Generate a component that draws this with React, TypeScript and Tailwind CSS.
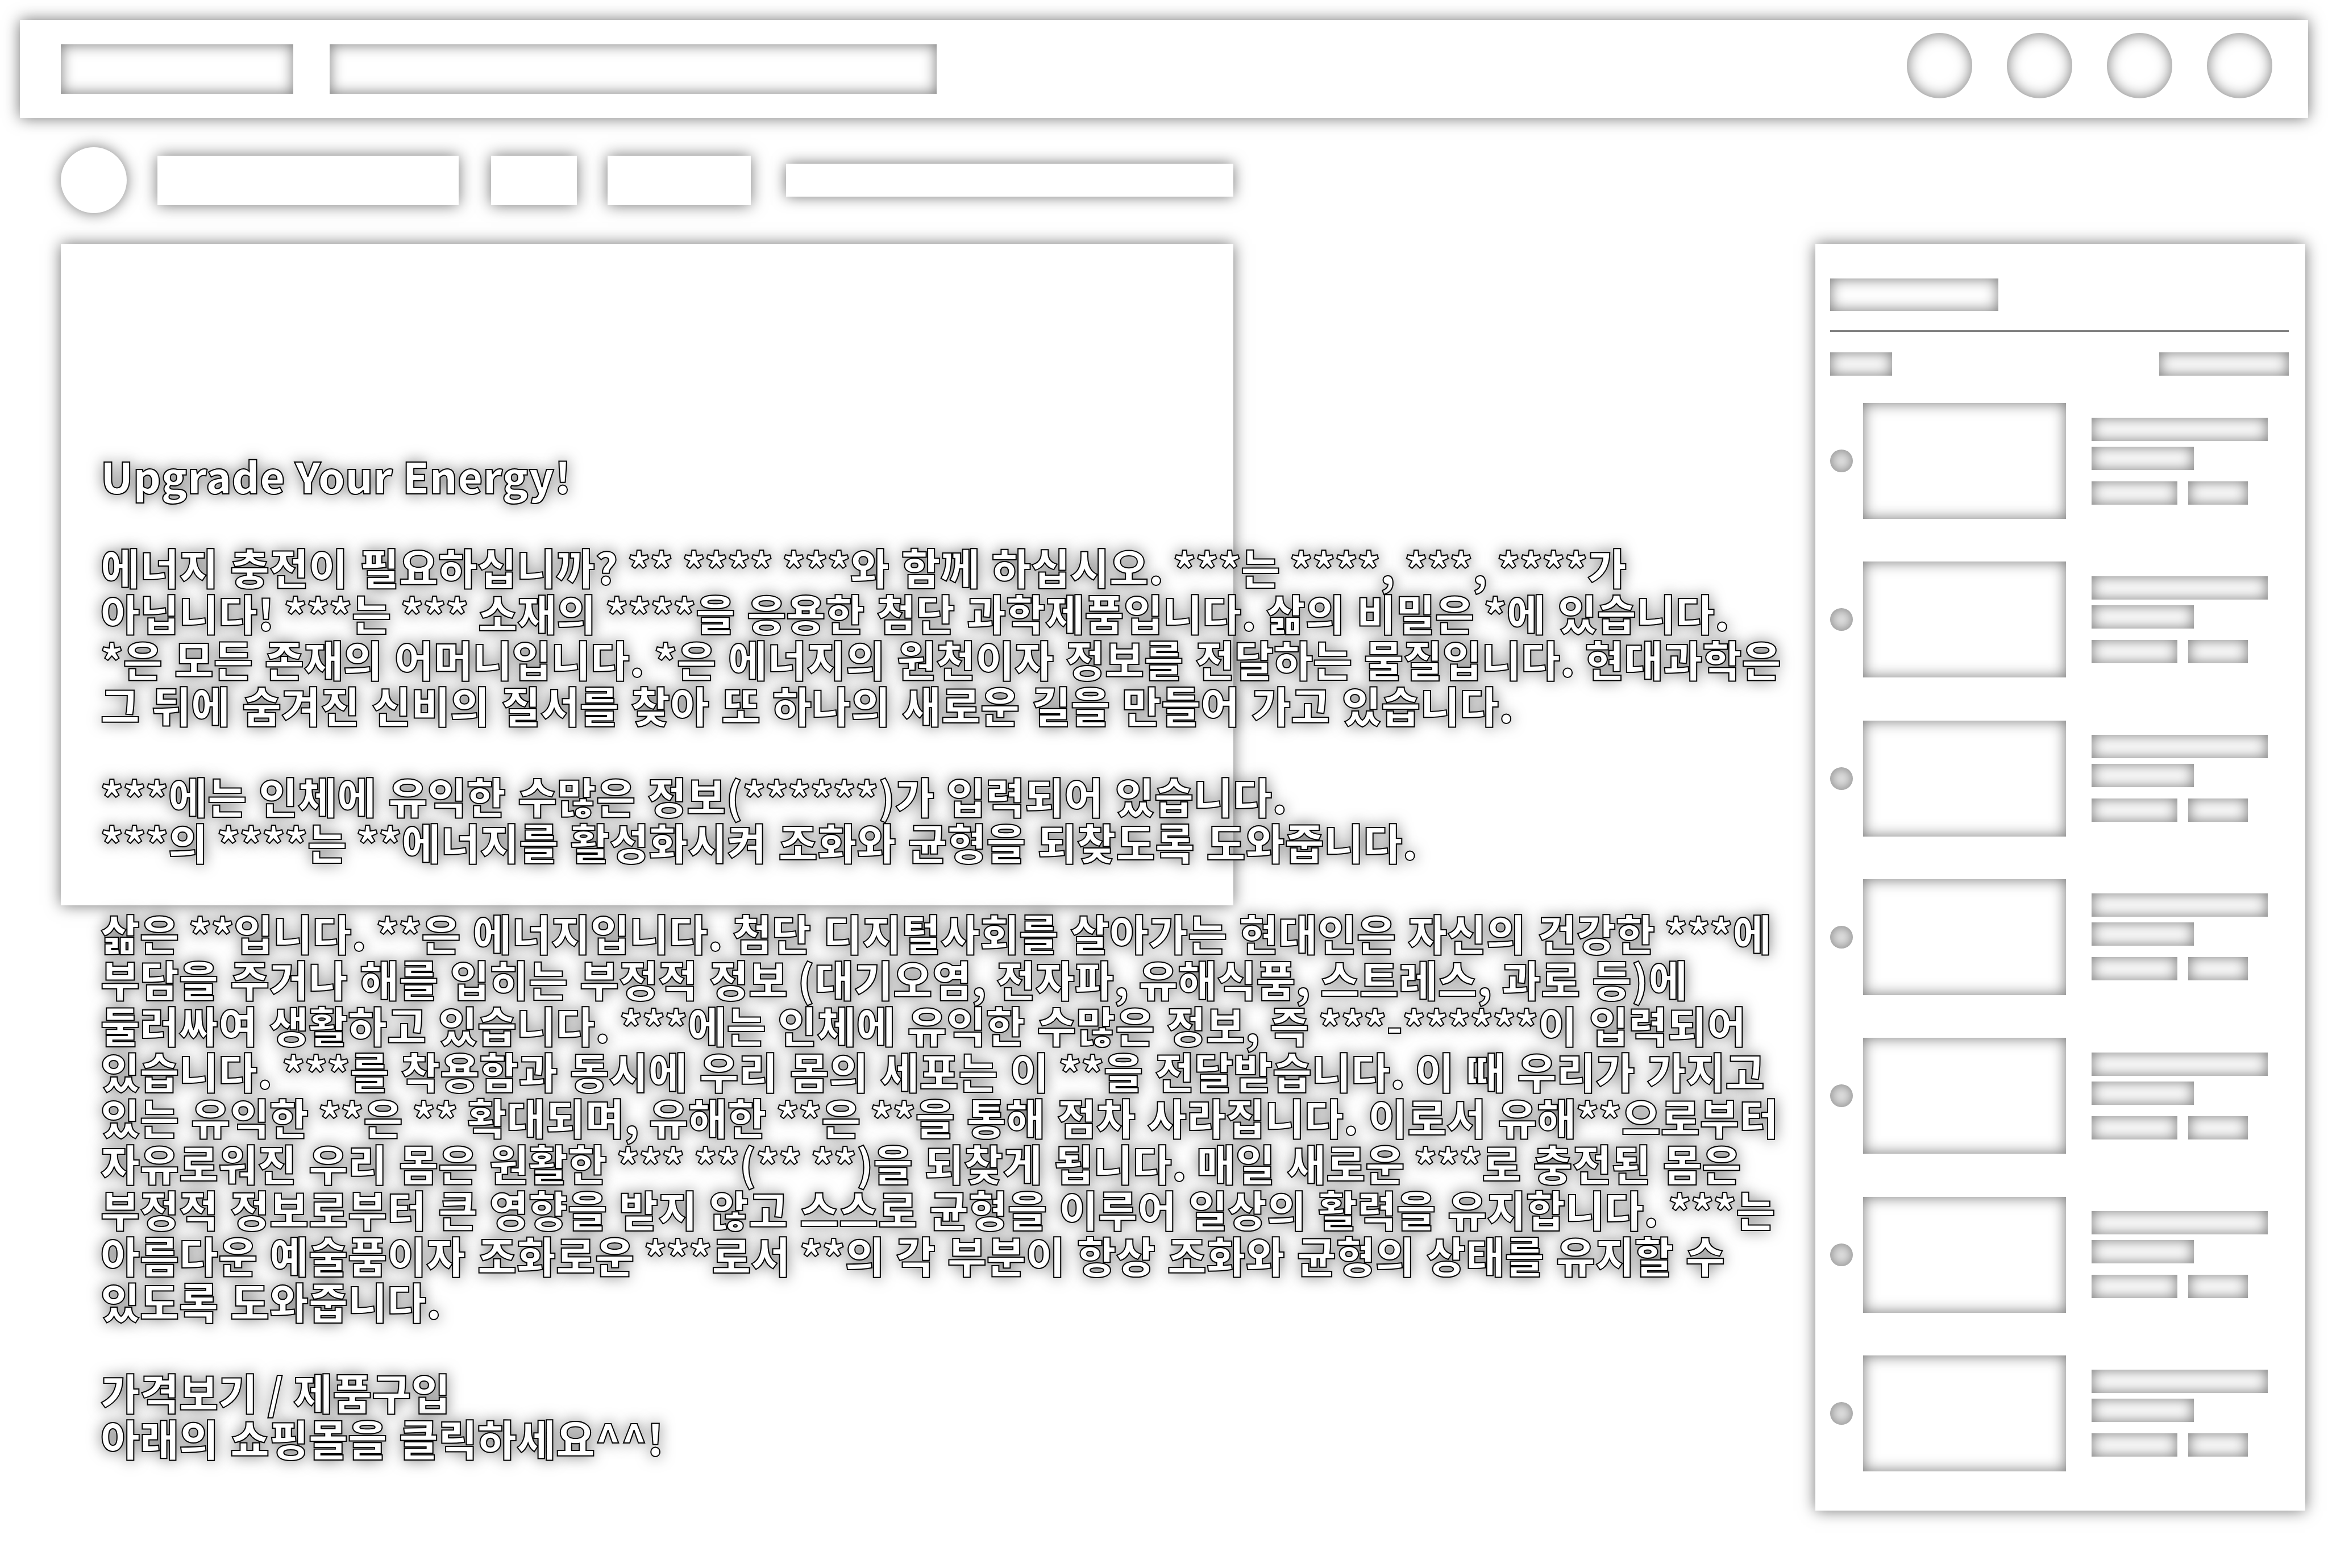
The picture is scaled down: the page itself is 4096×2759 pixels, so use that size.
const insetShade = "bg-white shadow-[inset_0_0_26px_rgba(0,0,0,0.55)]";
const raised = "bg-white shadow-[0_0_26px_rgba(0,0,0,0.55)]";

const paragraphs: string[][] = [
  ["Upgrade Your Energy!"],
  [
    "에너지 충전이 필요하십니까? ** **** ***와 함께 하십시오. ***는 ****, ***, ****가",
    "아닙니다! ***는 *** 소재의 ****을 응용한 첨단 과학제품입니다. 삶의 비밀은 *에 있습니다.",
    "*은 모든 존재의 어머니입니다. *은 에너지의 원천이자 정보를 전달하는 물질입니다. 현대과학은",
    "그 뒤에 숨겨진 신비의 질서를 찾아 또 하나의 새로운 길을 만들어 가고 있습니다.",
  ],
  [
    "***에는 인체에 유익한 수많은 정보(******)가 입력되어 있습니다.",
    "***의 ****는 **에너지를 활성화시켜 조화와 균형을 되찾도록 도와줍니다.",
  ],
  [
    "삶은 **입니다. **은 에너지입니다. 첨단 디지털사회를 살아가는 현대인은 자신의 건강한 ***에",
    "부담을 주거나 해를 입히는 부정적 정보 (대기오염, 전자파, 유해식품, 스트레스, 과로 등)에",
    "둘러싸여 생활하고 있습니다. ***에는 인체에 유익한 수많은 정보, 즉 ***-******이 입력되어",
    "있습니다. ***를 착용함과 동시에 우리 몸의 세포는 이 **을 전달받습니다. 이 때 우리가 가지고",
    "있는 유익한 **은 ** 확대되며, 유해한 **은 **을 통해 점차 사라집니다. 이로서 유해**으로부터",
    "자유로워진 우리 몸은 원활한 *** **(** **)을 되찾게 됩니다. 매일 새로운 ***로 충전된 몸은",
    "부정적 정보로부터 큰 영향을 받지 않고 스스로 균형을 이루어 일상의 활력을 유지합니다. ***는",
    "아름다운 예술품이자 조화로운 ***로서 **의 각 부분이 항상 조화와 균형의 상태를 유지할 수",
    "있도록 도와줍니다.",
  ],
  ["가격보기 / 제품구입", "아래의 쇼핑몰을 클릭하세요^^!"],
];

// Marks runs of Korean words as Korean so that the spaces between them take the font's Korean width.
function KoreanLine({ text }: { text: string }) {
  const parts = text.split(/([가-힣]+(?: [가-힣]+)+)/);
  return (
    <span className="block">
      {parts.map((part, i) => (i % 2 ? <span key={i} lang="ko">{part}</span> : part))}
    </span>
  );
}

function Header() {
  return (
    <header className={`flex items-center pl-[72px] pr-[63px] h-[173px] ${raised}`}>
      <a href="#home" aria-label="Home" className={`block w-[409px] h-[87px] ${insetShade}`} />
      <input type="text" aria-label="Search" className={`ml-16 w-[1068px] h-[87px] px-6 text-5xl outline-none ${insetShade}`} />
      <nav className="ml-auto mb-3 flex gap-[61px]">
        {["Create", "Apps", "Notifications", "Account"].map((name) => (
          <button key={name} aria-label={name} className={`size-[115px] rounded-full ${insetShade}`} />
        ))}
      </nav>
    </header>
  );
}

function ChannelBar() {
  return (
    <div className="flex items-center h-[116px]">
      <button aria-label="Channel" className={`size-[116px] rounded-full ${raised}`} />
      <div className={`ml-[54px] w-[530px] h-[87px] ${raised}`} />
      <button aria-label="Join" className={`ml-[57px] w-[151px] h-[87px] ${raised}`} />
      <button aria-label="Subscribe" className={`ml-[54px] w-[252px] h-[87px] ${raised}`} />
      <div className={`ml-auto w-[787px] h-[58px] ${raised}`} />
    </div>
  );
}

function PlaylistItem() {
  return (
    <li className="flex items-center">
      <span className={`size-10 rounded-full ${insetShade}`} />
      <span className={`ml-[18px] w-[357px] h-[204px] ${insetShade}`} />
      <div className="ml-[45px]">
        <div className={`w-[310px] h-[41px] ${insetShade}`} />
        <div className={`mt-[10px] w-[180px] h-[41px] ${insetShade}`} />
        <div className="mt-5 flex gap-[19px]">
          <div className={`w-[151px] h-[41px] ${insetShade}`} />
          <div className={`w-[105px] h-[41px] ${insetShade}`} />
        </div>
      </div>
    </li>
  );
}

function Playlist() {
  return (
    <aside className={`flex flex-col w-[862px] h-[2229px] pl-[26px] pr-[29px] pt-[61px] pb-[69px] ${raised}`}>
      <div className={`w-[296px] h-[57px] ${insetShade}`} />
      <hr className="mt-[34px] border-0 h-[3px] bg-[#808080]" />
      <div className="mt-9 flex justify-between">
        <div className={`w-[109px] h-[41px] ${insetShade}`} />
        <div className={`w-[228px] h-[41px] ${insetShade}`} />
      </div>
      <ul className="mt-12 flex-1 flex flex-col justify-between">
        {[0, 1, 2, 3, 4, 5, 6].map((row) => (
          <PlaylistItem key={row} />
        ))}
      </ul>
    </aside>
  );
}

function Article() {
  return (
    <article
      className="absolute left-[70px] top-[367px] flex flex-col gap-[79px] whitespace-nowrap font-['Noto_Sans_CJK_KR',sans-serif] text-[75px] leading-[81px] font-black text-white [-webkit-text-stroke:2px_black] [text-shadow:0_0_26px_rgba(0,0,0,0.6)]"
    >
      {paragraphs.map((lines, i) =>
        i === 0 ? (
          <h1 key={i}>{lines[0]}</h1>
        ) : (
          <p key={i}>
            {lines.map((line) => (
              <KoreanLine key={line} text={line} />
            ))}
          </p>
        ),
      )}
    </article>
  );
}

export default function App() {
  return (
    <div className="min-h-screen overflow-hidden bg-white p-[35px]">
      <Header />
      <div className="mt-[51px] flex justify-between pl-[72px] pr-[5px]">
        <main className="w-[2063px]">
          <ChannelBar />
          <section className={`relative mt-[54px] h-[1164px] ${raised}`}>
            <Article />
          </section>
        </main>
        <div className="pt-[170px]">
          <Playlist />
        </div>
      </div>
    </div>
  );
}
